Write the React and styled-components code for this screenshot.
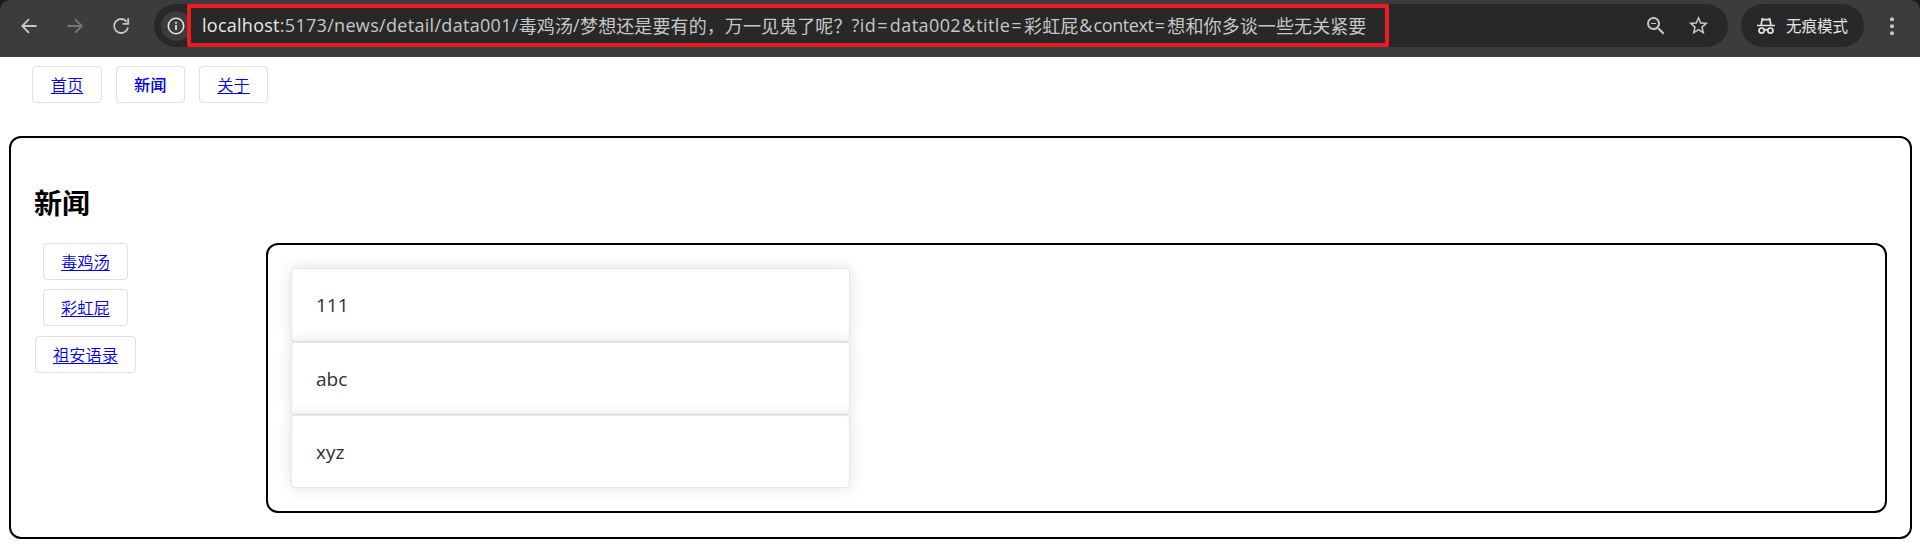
import React from "react";
import styled, { createGlobalStyle } from "styled-components";
import { MdStarBorder, MdZoomOut } from "react-icons/md";

const Global = createGlobalStyle`
  * { box-sizing: border-box; }
  body { margin: 0; background: #fff; font-family: "Open Sans", "Noto Sans CJK SC", sans-serif; }
`;

const WindowTop = styled.div`
  background: #1c1c1c;
`;
const Toolbar = styled.header`
  height: 57px;
  display: flex;
  align-items: flex-start;
  padding: 4px 0 0 11px;
  background: #3c3c3c;
  border-radius: 10px 10px 0 0;
`;
const ToolButton = styled.span`
  flex: none;
  display: flex;
  align-items: center;
  justify-content: center;
  width: ${(p) => p.$w || 46}px;
  height: 43px;
  color: ${(p) => p.$color || "#c7c7c7"};
`;
const AddressBar = styled.div`
  flex: none;
  width: 1574px;
  height: 43px;
  margin-left: 16px;
  display: flex;
  align-items: center;
  background: #282828;
  border-radius: 22px;
  padding-left: 7px;
`;
const SiteInfo = styled.span`
  flex: none;
  display: flex;
  align-items: center;
  justify-content: center;
  width: 30px;
  height: 30px;
  border-radius: 50%;
  background: #3c3c3c;
  color: #e3e3e3;
`;
const UrlFrame = styled.div`
  flex: none;
  width: 1202px;
  height: 43px;
  margin-left: -4px;
  display: flex;
  align-items: center;
  padding-left: 11px;
  border: 4px solid #ed1c24;
  border-radius: 2px;
  background: #282828;
  white-space: nowrap;
  color: #c7c7c7;
`;
const Latin = styled.span`
  font-size: 18px;
  line-height: 35px;
  letter-spacing: ${(p) => p.$ls || 0}px;
  color: ${(p) => (p.$host ? "#e8e8e8" : "inherit")};
`;
const Sign = styled.span`
  display: inline-block;
  padding-left: 1px;
  padding-right: ${(p) => (p.$wide ? 2.4 : 1)}px;
  letter-spacing: 0;
`;
const Han = styled.span`
  font: 18px/35px "Noto Sans CJK SC", sans-serif;
  letter-spacing: 0.1px;
`;
const AddressActions = styled.div`
  margin-left: auto;
  margin-right: 9px;
  display: flex;
`;
const Incognito = styled.div`
  flex: none;
  width: 123px;
  height: 43px;
  margin-left: 13px;
  padding-left: 15px;
  display: flex;
  align-items: center;
  gap: 10px;
  border-radius: 22px;
  background: #282828;
  color: #e3e3e3;
  font: 400 15.5px/43px "Noto Sans CJK SC", sans-serif;
  white-space: nowrap;
`;

const TopNav = styled.nav`
  display: flex;
  gap: 14px;
  padding: 9px 0 0 32.4px;
`;
const NavLink = styled.a`
  display: block;
  height: 37px;
  padding: 0 17.4px;
  border: 1px solid #dcdfe6;
  border-radius: 4px;
  background: #fff;
  color: #0000ee;
  font: ${(p) => (p.$active ? 500 : 350)} 16.25px/35px "Noto Sans CJK SC", sans-serif;
  text-decoration: ${(p) => (p.$active ? "none" : "underline")};
  text-underline-offset: 2px;
  text-decoration-thickness: 1px;
  white-space: nowrap;
`;
const Panel = styled.main`
  margin: 33px 8px 0 9px;
  height: 403px;
  border: 2px solid #000;
  border-radius: 12px;
  padding: 43px 23px 0;
`;
const Title = styled.h2`
  margin: 0;
  font: 700 28px/42px "Noto Sans CJK SC", sans-serif;
  color: #000;
`;
const Columns = styled.div`
  display: flex;
  margin-top: 20px;
`;
const SideNav = styled.nav`
  width: 102px;
  padding-left: 0.8px;
  margin-right: 130px;
  display: flex;
  flex-direction: column;
  align-items: center;
  gap: 9.3px;
`;
const Content = styled.section`
  flex: 1;
  height: 270px;
  border: 2px solid #000;
  border-radius: 12px;
  padding: 23px;
`;
const Card = styled.article`
  width: 559px;
  height: 73px;
  padding-left: 24px;
  border: 1px solid #e4e7ed;
  border-radius: 4px;
  background: #fff;
  box-shadow: 0 0 15px rgba(0, 0, 0, 0.12);
  color: #303133;
  font-size: 19px;
  line-height: 72px;
  &:first-child { height: 74px; }
`;

const Icon = ({ size = 20, children, sw = 1.8 }) => (
  <svg width={size} height={size} viewBox="0 0 20 20" fill="none" stroke="currentColor" strokeWidth={sw}>
    {children}
  </svg>
);

const sideLinks = ["毒鸡汤", "彩虹屁", "祖安语录"];
const cards = ["111", "abc", "xyz"];

export default function App() {
  return (
    <>
      <Global />
      <WindowTop>
        <Toolbar>
          <ToolButton $w={35}>
            <Icon><path d="M17.500 10H3.800M10 3.200 3.200 10l6.800 6.800" /></Icon>
          </ToolButton>
          <ToolButton $w={58} $color="#777">
            <Icon><path d="M2.500 10h13.700M10 3.200 16.800 10l-6.800 6.800" /></Icon>
          </ToolButton>
          <ToolButton $w={34}>
            <Icon>
              <path d="M15.600 5.600A7 7 0 1 0 17 11.400M17.200 2.300v5.600h-5.600" />
            </Icon>
          </ToolButton>
          <AddressBar>
            <SiteInfo>
              <Icon sw={1.6}>
                <circle cx="10" cy="10" r="7.700" />
                <path d="M10 9v5M10 6v1.800" strokeWidth="1.800" />
              </Icon>
            </SiteInfo>
            <UrlFrame>
              <Latin $host $ls={0.26}>localhost</Latin>
              <Latin $ls={0.31}>:5173/news/detail/data001/</Latin>
              <Han>毒鸡汤</Han>
              <Latin $ls={0.4}>/</Latin>
              <Han>梦想还是要有的，万一见鬼了呢？</Han>
              <Latin $ls={0.42}>
                ?id<Sign $wide>=</Sign>data002<Sign>&amp;</Sign>title<Sign $wide>=</Sign>
              </Latin>
              <Han>彩虹屁</Han>
              <Latin $ls={-0.38}>
                <Sign>&amp;</Sign>context<Sign $wide>=</Sign>
              </Latin>
              <Han>想和你多谈一些无关紧要</Han>
            </UrlFrame>
            <AddressActions>
              <ToolButton $w={42}><MdZoomOut size={24} /></ToolButton>
              <ToolButton $w={42}><MdStarBorder size={23} /></ToolButton>
            </AddressActions>
          </AddressBar>
          <Incognito>
            <Icon sw={1.7}>
              <path d="M1 9.500h18M5 9.500l1.300-6.600 2 .700h3.400l2-.700L15 9.500" />
              <circle cx="5.600" cy="14.600" r="2.600" />
              <circle cx="14.400" cy="14.600" r="2.600" />
              <path d="M8.200 14.200q1.800-1 3.600 0" />
            </Icon>
            无痕模式
          </Incognito>
          <ToolButton $w={56}>
            <Icon>
              <g fill="currentColor" stroke="none">
                <circle cx="10" cy="3.200" r="2" />
                <circle cx="10" cy="10.200" r="2" />
                <circle cx="10" cy="17.200" r="2" />
              </g>
            </Icon>
          </ToolButton>
        </Toolbar>
      </WindowTop>
      <TopNav>
        <NavLink>首页</NavLink>
        <NavLink $active>新闻</NavLink>
        <NavLink>关于</NavLink>
      </TopNav>
      <Panel>
        <Title>新闻</Title>
        <Columns>
          <SideNav>
            {sideLinks.map((t) => <NavLink key={t}>{t}</NavLink>)}
          </SideNav>
          <Content>
            {cards.map((t) => <Card key={t}>{t}</Card>)}
          </Content>
        </Columns>
      </Panel>
    </>
  );
}
